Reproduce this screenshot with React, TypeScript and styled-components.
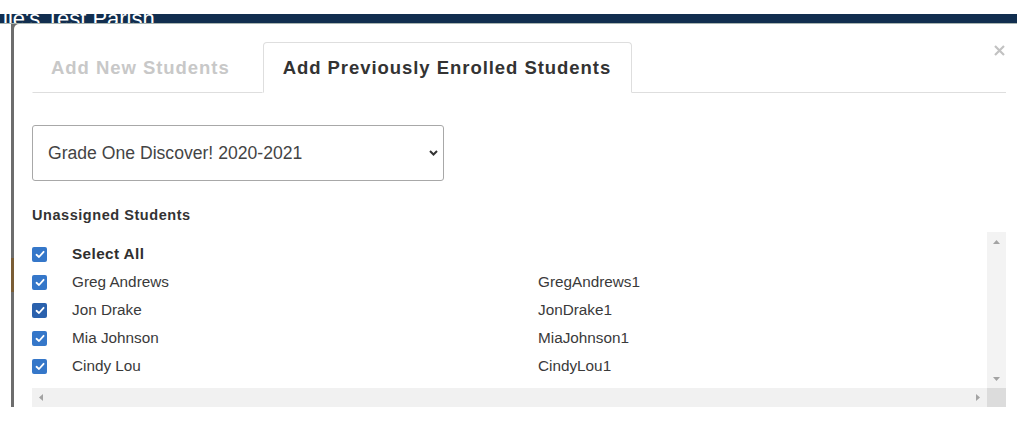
import styled, { createGlobalStyle } from "styled-components";

const GlobalStyle = createGlobalStyle`
  html, body {
    margin: 0;
    padding: 0;
    background: #ffffff;
    font-family: "Liberation Sans", Arial, sans-serif;
  }
  * { box-sizing: border-box; }
`;

const Page = styled.div`
  width: 1024px;
  height: 432px;
  overflow: hidden;
  background: #ffffff;
`;

const Header = styled.div`
  height: 24px;
  display: flex;
  flex-direction: column;
  justify-content: flex-end;
`;

const Band = styled.div`
  width: 1017px;
  height: 10px;
  background: #112e4f;
  border-bottom: 1px solid #a9b5b1;
  overflow: hidden;
  color: #ffffff;
  font-size: 22px;
  line-height: 9px;
  padding-left: 3px;
  white-space: nowrap;
`;

const Stage = styled.div`
  display: flex;
  width: 1017px;
  height: 383px;
  padding-left: 11px;
`;

const Dim = styled.div`
  flex: 1;
  display: flex;
  background: linear-gradient(
    to bottom,
    #6d6d6d 0 234px,
    #7a5d35 234px 268px,
    #6d6d6d 268px
  );
`;

const Modal = styled.div`
  position: relative;
  flex: 1;
  margin-left: 3px;
  background: #ffffff;
  border-top-left-radius: 5px;
  padding: 18px 11px 0 18px;
`;

const Close = styled.button`
  position: absolute;
  top: 21px;
  right: 12px;
  width: 11px;
  height: 11px;
  padding: 0;
  border: 0;
  background: none;
  display: flex;
`;

const Tabs = styled.div`
  display: flex;
  height: 51px;
  border-bottom: 1px solid #dedede;
`;

const Tab = styled.div<{ $active?: boolean }>`
  display: flex;
  align-items: center;
  height: 51px;
  margin-bottom: -1px;
  font-size: 18.5px;
  font-weight: bold;
  letter-spacing: 0.95px;
  padding: ${(p) => (p.$active ? "0 20px 0 19px" : "0 32px 0 18px")};
  color: ${(p) => (p.$active ? "#333333" : "#c8c8c8")};
  background: #ffffff;
  border: 1px solid ${(p) => (p.$active ? "#dedede" : "transparent")};
  border-bottom-color: ${(p) => (p.$active ? "#ffffff" : "#dedede")};
  border-radius: 4px 4px 0 0;
`;

const SelectWrap = styled.div`
  position: relative;
  width: 412px;
  height: 56px;
  margin-top: 32px;
`;

const Select = styled.select`
  appearance: none;
  width: 100%;
  height: 100%;
  border: 1px solid #a8a8a8;
  border-radius: 3px;
  background: #ffffff;
  padding: 0 30px 0 15px;
  font-family: "Liberation Sans", Arial, sans-serif;
  font-size: 17.6px;
  color: #444444;
`;

const Chevron = styled.svg`
  position: absolute;
  right: 6px;
  top: 25px;
  pointer-events: none;
`;

const Label = styled.div`
  margin-top: 25px;
  font-size: 14.5px;
  line-height: 18px;
  font-weight: bold;
  letter-spacing: 0.55px;
  color: #333333;
`;

const ListBox = styled.div`
  display: grid;
  grid-template-columns: 1fr 19px;
  grid-template-rows: 1fr 19px;
  width: 974px;
  height: 175px;
  margin-top: 8px;
`;

const Rows = styled.div`
  padding-top: 8px;
  overflow: hidden;
`;

const Row = styled.div`
  display: grid;
  grid-template-columns: 40px 466px 1fr;
  align-items: center;
  height: 28px;
  font-size: 15.3px;
  color: #383838;
`;

const Box = styled.span<{ $focus?: boolean }>`
  display: flex;
  align-items: center;
  justify-content: center;
  width: 15px;
  height: 15px;
  border-radius: 2px;
  background: ${(p) => (p.$focus ? "#2a61ad" : "#3577c9")};
`;

const Name = styled.span<{ $bold?: boolean }>`
  font-weight: ${(p) => (p.$bold ? "bold" : "normal")};
  letter-spacing: ${(p) => (p.$bold ? "0.4px" : "0")};
  color: ${(p) => (p.$bold ? "#2f2f2f" : "#3a3a3a")};
`;

const VBar = styled.div`
  display: flex;
  flex-direction: column;
  justify-content: space-between;
  align-items: center;
  padding: 8px 0 7px;
  background: #f3f3f3;
`;

const HBar = styled.div`
  display: flex;
  justify-content: space-between;
  align-items: center;
  padding: 0 7px 0 7px;
  background: #f1f1f1;
`;

const Corner = styled.div`
  background: #dcdcdc;
`;

const Arrow = ({ dir }: { dir: "up" | "down" | "left" | "right" }) => {
  const pts = {
    up: "0,4 3.5,0 7,4",
    down: "0,0 3.5,4 7,0",
    left: "4,0 0,3.5 4,7",
    right: "0,0 4,3.5 0,7",
  }[dir];
  const vertical = dir === "up" || dir === "down";
  return (
    <svg
      width={vertical ? 7 : 4}
      height={vertical ? 4 : 7}
      viewBox={vertical ? "0 0 7 4" : "0 0 4 7"}
    >
      <polygon points={pts} fill="#a3a3a3" />
    </svg>
  );
};

const Check = () => (
  <svg width="10" height="9" viewBox="0 0 10 9">
    <path
      d="M1.5 4.8 L4 7 L8.6 1.8"
      fill="none"
      stroke="#ffffff"
      strokeWidth="1.8"
      strokeLinecap="round"
      strokeLinejoin="round"
    />
  </svg>
);

const students = [
  { name: "Greg Andrews", user: "GregAndrews1" },
  { name: "Jon Drake", user: "JonDrake1", focus: true },
  { name: "Mia Johnson", user: "MiaJohnson1" },
  { name: "Cindy Lou", user: "CindyLou1" },
];

export default function App() {
  return (
    <Page>
      <GlobalStyle />
      <Header>
        <Band>ile's Test Parish</Band>
      </Header>
      <Stage>
        <Dim>
          <Modal>
            <Close aria-label="Close">
              <svg width="11" height="11" viewBox="0 0 11 11">
                <path
                  d="M1 1 L10 10 M10 1 L1 10"
                  stroke="#c2c2c2"
                  strokeWidth="2.2"
                />
              </svg>
            </Close>
            <Tabs>
              <Tab>Add New Students</Tab>
              <Tab $active>Add Previously Enrolled Students</Tab>
            </Tabs>
            <SelectWrap>
              <Select defaultValue="g1">
                <option value="g1">Grade One Discover! 2020-2021</option>
              </Select>
              <Chevron width="9" height="6" viewBox="0 0 9 6">
                <path
                  d="M1 1 L4.5 4.5 L8 1"
                  fill="none"
                  stroke="#333333"
                  strokeWidth="2"
                />
              </Chevron>
            </SelectWrap>
            <Label>Unassigned Students</Label>
            <ListBox>
              <Rows>
                <Row>
                  <Box>
                    <Check />
                  </Box>
                  <Name $bold>Select All</Name>
                  <span />
                </Row>
                {students.map((s) => (
                  <Row key={s.user}>
                    <Box $focus={s.focus}>
                      <Check />
                    </Box>
                    <Name>{s.name}</Name>
                    <Name>{s.user}</Name>
                  </Row>
                ))}
              </Rows>
              <VBar>
                <Arrow dir="up" />
                <Arrow dir="down" />
              </VBar>
              <HBar>
                <Arrow dir="left" />
                <Arrow dir="right" />
              </HBar>
              <Corner />
            </ListBox>
          </Modal>
        </Dim>
      </Stage>
    </Page>
  );
}
